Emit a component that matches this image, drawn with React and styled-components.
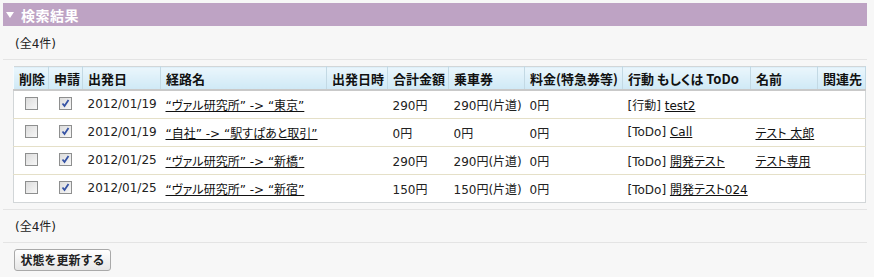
import React from "react";
import styled, { createGlobalStyle } from "styled-components";

const Global = createGlobalStyle`
  html, body { margin: 0; padding: 0; background: #f7f7f7; }
  body {
    font-family: "DejaVu Sans", "Noto Sans CJK JP", sans-serif;
    font-size: 12px;
    color: #222;
    font-feature-settings: "palt";
  }
`;

const Page = styled.div`
  width: 874px;
  height: 277px;
  padding: 3px 7px 0 3px;
  box-sizing: border-box;
  overflow: hidden;
`;

const TitleBar = styled.div`
  height: 23px;
  background: #bea3c4;
  display: flex;
  align-items: center;
  gap: 7px;
  padding-left: 3px;
  color: #fff;
  font-family: "Noto Sans CJK JP", sans-serif;
  font-weight: bold;
  font-size: 14px;
  letter-spacing: 0.5px;
`;

const Tri = styled.span`
  width: 0;
  height: 0;
  border-left: 4px solid transparent;
  border-right: 4px solid transparent;
  border-top: 6px solid #fff;
  margin-top: 1px;
`;

const Count = styled.div`
  height: ${(p) => p.$h}px;
  display: flex;
  align-items: center;
  padding-left: 12px;
  font-size: 12px;
  color: #222;
  border-bottom: 1px solid #e4e4e4;
  box-sizing: border-box;
`;

const TableWrap = styled.div`
  padding: 6px 0 6px 10px;
  border-bottom: 1px solid #e4e4e4;
`;

const Table = styled.table`
  width: 852px;
  table-layout: fixed;
  border-collapse: collapse;
  background: #fff;
  border: 1px solid #d2d6d8;
`;

const Th = styled.th`
  height: 22px;
  padding: 0 0 0 5px;
  text-align: left;
  font-family: "Noto Sans CJK JP", sans-serif;
  font-size: 13px;
  font-weight: bold;
  color: #111;
  white-space: nowrap;
  background: linear-gradient(#eaf6fc, #cfe9f6);
  border-right: 1px solid #c3d9e4;
  border-left: 1px solid #f6fbfe;
  border-bottom: 2px solid #c9c9c9;
  overflow: hidden;
`;

const Tr = styled.tr`
  height: 28px;
  border-bottom: 1px solid #e5e0c8;
  &:last-child { border-bottom: none; }
`;

const Td = styled.td`
  padding: 0 0 0 ${(p) => (p.$center ? 0 : 5)}px;
  text-align: ${(p) => (p.$center ? "center" : "left")};
  white-space: nowrap;
  overflow: hidden;
  color: #222;
  font-size: 12px;
`;

const Link = styled.a`
  color: #111;
  text-decoration: underline;
  cursor: pointer;
`;

const Box = styled.span`
  display: inline-block;
  vertical-align: middle;
  width: 11px;
  height: 11px;
  border: 1px solid #8e8f8f;
  background: linear-gradient(135deg, #dcdcdc, #f7f7f7);
  position: relative;
  margin-top: -2px;
`;

const CheckSvg = styled.svg`
  position: absolute;
  left: 1px;
  top: 1px;
`;

const Check = ({ checked }) => (
  <Box>
    {checked && (
      <CheckSvg width="9" height="9" viewBox="0 0 9 9">
        <path d="M1.5 4.5 L3.5 7 L7.5 1" fill="none" stroke="#3552a4" strokeWidth="1.8" />
      </CheckSvg>
    )}
  </Box>
);

const ButtonRow = styled.div`
  padding: 6px 0 0 11px;
`;

const Button = styled.button`
  font-family: "Noto Sans CJK JP", sans-serif;
  font-size: 12px;
  font-weight: bold;
  color: #222;
  height: 22px;
  width: 97px;
  padding: 0;
  border: 1px solid #a9a9a9;
  border-radius: 3px;
  background: linear-gradient(#ffffff, #e6e6e6);
  line-height: 18px;
`;

const cols = [35, 34, 78, 166, 61, 61, 76, 98, 128, 67, 48];
const heads = ["削除", "申請", "出発日", "経路名", "出発日時", "合計金額", "乗車券", "料金(特急券等)", "行動 もしくは ToDo", "名前", "関連先"];

const rows = [
  { date: "2012/01/19", route: "“ヴァル研究所” -> “東京”", total: "290円", ticket: "290円(片道)", fee: "0円", kind: "[行動]", act: "test2", name: "" },
  { date: "2012/01/19", route: "“自社” -> “駅すぱあと取引”", total: "0円", ticket: "0円", fee: "0円", kind: "[ToDo]", act: "Call", name: "テスト 太郎" },
  { date: "2012/01/25", route: "“ヴァル研究所” -> “新橋”", total: "290円", ticket: "290円(片道)", fee: "0円", kind: "[ToDo]", act: "開発テスト", name: "テスト専用" },
  { date: "2012/01/25", route: "“ヴァル研究所” -> “新宿”", total: "150円", ticket: "150円(片道)", fee: "0円", kind: "[ToDo]", act: "開発テスト024", name: "" },
];

export default function App() {
  return (
    <Page>
      <Global />
      <TitleBar>
        <Tri />
        <span>検索結果</span>
      </TitleBar>
      <Count $h={34}>(全4件)</Count>
      <TableWrap>
        <Table>
          <colgroup>
            {cols.map((w, i) => (
              <col key={i} style={{ width: w }} />
            ))}
          </colgroup>
          <thead>
            <tr>
              {heads.map((h) => (
                <Th key={h}>{h}</Th>
              ))}
            </tr>
          </thead>
          <tbody>
            {rows.map((r, i) => (
              <Tr key={i}>
                <Td $center><Check /></Td>
                <Td $center><Check checked /></Td>
                <Td>{r.date}</Td>
                <Td><Link>{r.route}</Link></Td>
                <Td></Td>
                <Td>{r.total}</Td>
                <Td>{r.ticket}</Td>
                <Td>{r.fee}</Td>
                <Td>{r.kind} <Link>{r.act}</Link></Td>
                <Td>{r.name && <Link>{r.name}</Link>}</Td>
                <Td></Td>
              </Tr>
            ))}
          </tbody>
        </Table>
      </TableWrap>
      <Count $h={33}>(全4件)</Count>
      <ButtonRow>
        <Button>状態を更新する</Button>
      </ButtonRow>
    </Page>
  );
}
